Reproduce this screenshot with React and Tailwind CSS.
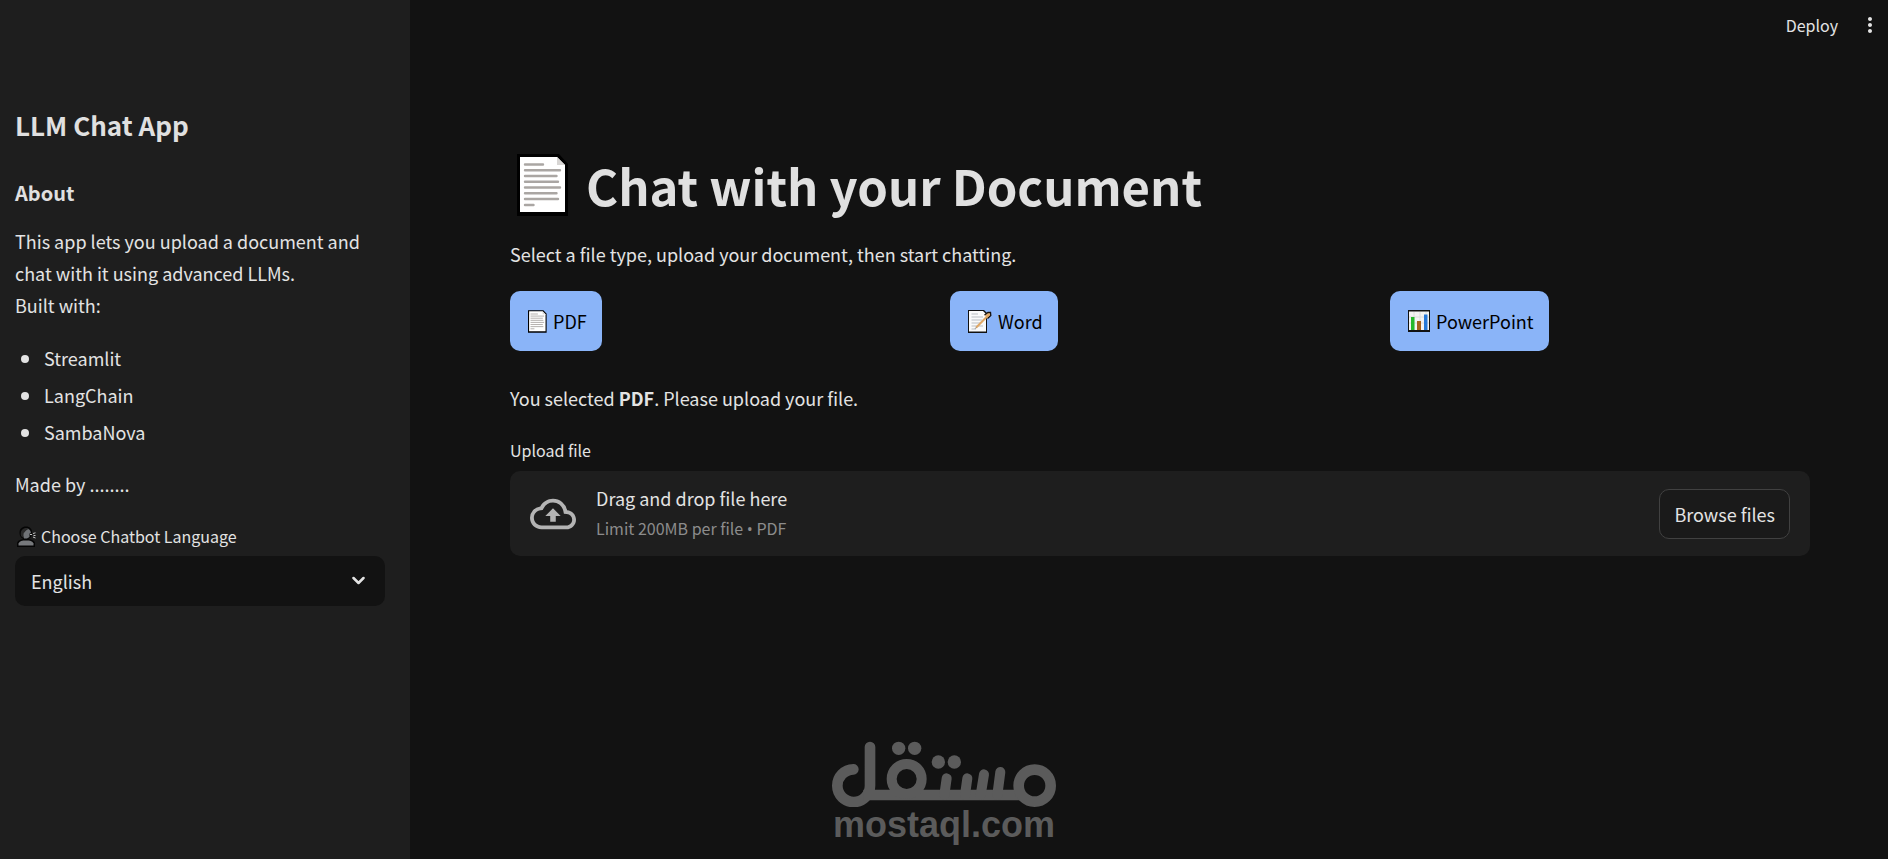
import { useState } from "react"
import { MdMoreVert, MdOutlineCloudUpload } from "react-icons/md"

const BUILT_WITH = ["Streamlit", "LangChain", "SambaNova"]
const LANGUAGES = ["English", "Arabic", "French"]

const PageIcon = ({ className }) => (
  <svg className={className} viewBox="0 0 52 62" aria-hidden="true">
    <path d="M0 0H42L51 10V62H0Z" fill="#000" />
    <path d="M3 3H40L48 11V58H3Z" fill="#fff" />
    <path d="M40 3V11H48Z" fill="#d8d6d4" />
    <path
      d="M8 10.500H26M8 16.200H43M8 22H39.500M8 27.800H41M8 33.500H43M8 39.300H39.500M8 45H41M8 51H16.500"
      stroke="#aaa6a3"
      strokeWidth="2.400"
      strokeLinecap="round"
    />
  </svg>
)

const MemoIcon = ({ className }) => (
  <svg className={className} viewBox="0 0 24 23" aria-hidden="true">
    <path d="M0 0H16L19 3V23H0Z" fill="#111" />
    <path d="M1 1H15L18 4V21.500H1Z" fill="#fafafa" />
    <path d="M3.500 4H10M3.500 7H15M3.500 10H14M3.500 13H12M3.500 16H15M3.500 19H8" stroke="#b9bec3" />
    <path d="M16.500 5L20 2.500L22.500 2.500L22.800 5.500L19.500 8.500" fill="#e3b077" stroke="#16120e" strokeWidth="1.300" />
    <path d="M8 17.800L21 4.500" stroke="#e0a866" strokeWidth="2" />
    <path d="M7 18.800L8.500 17.200" stroke="#8f8f8f" />
  </svg>
)

const ChartIcon = ({ className }) => (
  <svg className={className} viewBox="0 0 22 22" aria-hidden="true">
    <path d="M0 0H22V22H0Z" fill="#111" />
    <path d="M1 1.500H21V20H1Z" fill="#f3f3f3" />
    <path d="M1 7H21M1 13H21M6 2V20M12 2V20M18 2V20" stroke="#dcdcdc" />
    <path d="M3 7H6.500V20H3Z" fill="#25b82b" />
    <path d="M9 11H13V20H9Z" fill="#a5621d" />
    <path d="M16 4.500H19.500V20H16Z" fill="#2678d8" />
  </svg>
)

const SpeakingIcon = ({ className }) => (
  <svg className={className} viewBox="0 0 20 21" aria-hidden="true">
    <path d="M9 .500C13 .500 15 3 15 6.500C15 11 13 13 9 13.500C4 13 2.500 10 2.500 6.500C2.500 3 5 .500 9 .500Z" fill="#050505" />
    <path d="M5 7C5 4 7 2.500 9.500 2.500C12 2.500 13.500 4 14 7L12.500 7.500V11L10 12.500H7Z" fill="#6f7276" />
    <path d="M4 10C3 5 5 2 10 2L12 3C10 3.500 8.500 4.500 7.500 6.500C6.500 6 6.500 9 6.500 12Z" fill="#2a2a2a" />
    <path d="M0 21V17C1 14 4 13 9 13C14 13 17 14 18 17V21Z" fill="#050505" />
    <path d="M1.500 19.500V17.500C2.500 15 5 14.500 9 14.500C13 14.500 15.500 15 16.500 17.500V19.500Z" fill="#77797c" />
    <path d="M13 8.500H15M16 7.500L18.500 6.800M16.500 9.500H18.500M16 11L18.500 12" stroke="#c4c4c4" />
  </svg>
)

const FILE_TYPES = [
  { name: "PDF", icon: <PageIcon className="h-[23px] w-[19px]" /> },
  { name: "Word", icon: <MemoIcon className="h-[23px] w-6" /> },
  { name: "PowerPoint", icon: <ChartIcon className="size-[22px]" /> },
]

const Watermark = () => (
  <div className="pointer-events-none absolute inset-x-0 bottom-4 flex flex-col items-center text-[#5b5b5b]">
    <svg className="h-[66px] w-56" viewBox="66 56 672 198" fill="none" stroke="currentColor" aria-hidden="true">
      <path
        d="M130 141A49 49 0 1 0 180 190V74"
        strokeWidth="32"
        strokeLinecap="round"
        strokeLinejoin="round"
      />
      <path d="M160 218H640" strokeWidth="32" />
      <circle cx="290" cy="170" r="45" strokeWidth="30" />
      <circle cx="674" cy="190" r="48" strokeWidth="32" />
      <path
        d="M410 168L403 218M472 168L465 218M522 156L512 218M571 149L562 218"
        strokeWidth="30"
        strokeLinecap="round"
      />
      <g fill="currentColor" stroke="none">
        <circle cx="266" cy="78" r="20" />
        <circle cx="314" cy="78" r="20" />
        <circle cx="385" cy="119" r="20" />
        <circle cx="433" cy="119" r="20" />
      </g>
    </svg>
    <span className="font-['Liberation_Sans',sans-serif] text-4xl leading-9 font-bold">mostaql.com</span>
  </div>
)

const Sidebar = () => {
  const [language, setLanguage] = useState("English")

  return (
    <aside className="w-[410px] shrink-0 bg-[#1e1e1e] pt-[105px] pr-[25px] pl-[15px]">
      <h2 className="text-[26px] leading-10 font-semibold text-[#e0e0e0]">LLM Chat App</h2>
      <h3 className="mt-7 text-xl leading-10 font-semibold text-[#e0e0e0]">About</h3>
      <p className="mt-3">
        This app lets you upload a document and chat with it using advanced LLMs.
        <br />
        Built with:
      </p>
      <ul className="mt-[21px] flex flex-col gap-[5px] pl-1.5">
        {BUILT_WITH.map((item) => (
          <li
            key={item}
            className="flex items-center gap-[15px] before:mt-0.5 before:size-2 before:rounded-full before:bg-current"
          >
            {item}
          </li>
        ))}
      </ul>
      <p className="mt-5">Made by ........</p>
      <label htmlFor="language" className="mt-5 flex items-center gap-1 text-base leading-8">
        <SpeakingIcon className="ml-0.5 h-[21px] w-5" />
        Choose Chatbot Language
      </label>
      <div className="relative mt-1">
        <select
          id="language"
          value={language}
          onChange={(e) => setLanguage(e.target.value)}
          className="h-[50px] w-full appearance-none rounded-[10px] bg-[#121212] px-4 outline-none"
        >
          {LANGUAGES.map((item) => (
            <option key={item}>{item}</option>
          ))}
        </select>
        <svg
          className="pointer-events-none absolute top-5 right-5 h-[9px] w-[13px]"
          viewBox="0 0 13 9"
          fill="none"
          stroke="currentColor"
          strokeWidth="2.500"
          strokeLinecap="round"
          strokeLinejoin="round"
          aria-hidden="true"
        >
          <path d="M1.500 2L6.500 7L11.500 2" />
        </svg>
      </div>
    </aside>
  )
}

export default function App() {
  const [fileType, setFileType] = useState("PDF")

  return (
    <div className="relative flex min-h-screen bg-[#121212] font-['Noto_Sans_CJK_SC',sans-serif] text-lg leading-8 text-[#e3e3e3]">
      <Sidebar />

      <div className="min-w-0 flex-1">
        <header className="flex h-[50px] items-center justify-end gap-5 pr-1.5">
          <button className="text-base">Deploy</button>
          <button aria-label="Main menu">
            <MdMoreVert className="size-6" />
          </button>
        </header>

        <main className="pt-[102px] pr-[78px] pl-[100px]">
          <h1 className="flex items-center gap-[17px] text-[49px] leading-[66px] font-bold text-[#e0e0e0]">
            <PageIcon className="ml-[7px] h-[62px] w-[52px]" />
            Chat with your Document
          </h1>
          <p className="mt-5">Select a file type, upload your document, then start chatting.</p>

          <div className="mt-[21px] grid grid-cols-3 gap-5">
            {FILE_TYPES.map(({ name, icon }) => (
              <button
                key={name}
                onClick={() => setFileType(name)}
                className="flex h-[60px] items-center gap-1.5 justify-self-start rounded-[10px] bg-[#8ab4f8] pr-[15px] pl-[18px] text-black"
              >
                {icon}
                {name}
              </button>
            ))}
          </div>

          <p className="mt-[31px]">
            You selected <strong className="font-bold">{fileType}</strong>. Please upload your file.
          </p>

          <label htmlFor="upload" className="mt-5 block text-base leading-8">
            Upload file
          </label>
          <div className="mt-[5px] flex items-center rounded-[10px] bg-[#1e1e1e] px-5 py-[15px]">
            <input id="upload" type="file" className="sr-only" />
            <MdOutlineCloudUpload className="size-[46px] text-[#b4b4b4]" />
            <div className="ml-5 flex-1">
              <p className="leading-6">Drag and drop file here</p>
              <p className="mt-1.5 text-base leading-6 text-[#8c8c8c]">
                Limit 200MB per file <span className="font-['Open_Sans',sans-serif]">•</span> {fileType}
              </p>
            </div>
            <button className="h-[50px] rounded-[10px] border border-[#414141] bg-[#1a1a1a] px-3.5">
              Browse files
            </button>
          </div>
        </main>
      </div>

      <Watermark />
    </div>
  )
}
